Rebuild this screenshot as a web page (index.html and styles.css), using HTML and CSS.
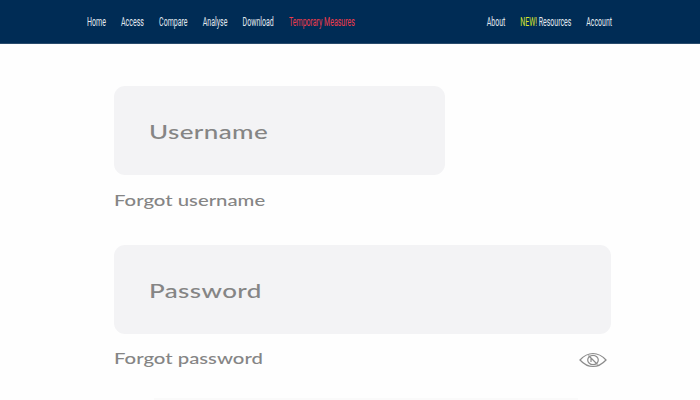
FILE: index.html
```html
<!DOCTYPE html>
<html lang="en">
<head>
<meta charset="utf-8">
<title>Sign in</title>
<link rel="stylesheet" href="styles.css">
</head>
<body>
<nav class="bar">
  <div class="links">
    <a>Home</a><a>Access</a><a>Compare</a><a>Analyse</a><a>Download</a><a class="alert">Temporary Measures</a>
  </div>
  <div class="links right">
    <a>About</a><a><span class="new">NEW!</span> Resources</a><a>Account</a>
  </div>
</nav>
<main class="form">
  <div class="field short"><span class="wide">Username</span></div>
  <div class="row"><a class="wide">Forgot username</a></div>
  <div class="field"><span class="wide">Password</span></div>
  <div class="row"><a class="wide">Forgot password</a>
    <svg class="eye" width="28" height="16" viewBox="0 0 28 16" fill="none" stroke="#8c8c8c" stroke-width="1.2">
      <path d="M1 8Q7 1.5 14 1.5Q21 1.5 27 8Q21 14.5 14 14.5Q7 14.5 1 8Z"/>
      <ellipse cx="14" cy="8" rx="5.3" ry="4.7"/>
      <path d="M9.5 3.5L18.5 12.5M12 10V6.5"/>
    </svg>
  </div>
  <div class="line"></div>
</main>
</body>
</html>
```
FILE: styles.css
```css
* { box-sizing: border-box; }
body { margin: 0; height: 400px; overflow: hidden; background: #fefefe; }
.bar {
  height: 44px;
  padding: 1px 88px 0 87px;
  display: flex;
  justify-content: space-between;
  align-items: center;
  background: #002c55;
  border-bottom: 1px solid #294b6c;
  font: 12px/14px Roboto, sans-serif;
  color: #e2e9ef;
}
.links {
  display: flex;
  gap: 26px;
  width: 260px;
  white-space: nowrap;
  transform: scaleX(.584);
  transform-origin: left;
}
.right { justify-content: flex-end; transform: scaleX(.578); transform-origin: right; }
.alert { color: #ee3b4b; }
.new { color: #d5e52b; }
.form {
  width: 497px;
  margin: 42px 0 0 114px;
  font-family: Lato, sans-serif;
  color: #858585;
}
.field {
  height: 89px;
  padding-left: 35px;
  display: flex;
  align-items: center;
  border-radius: 11px;
  background: #f3f3f5;
  font-size: 20px;
  font-weight: 500;
  letter-spacing: .3px;
}
.short { width: 331px; }
.wide { transform: scaleX(1.3); transform-origin: left; padding-top: 1px; }
.row {
  height: 69.5px;
  padding: 14.5px 4px 0 0;
  display: flex;
  align-items: flex-start;
  justify-content: space-between;
  font-size: 16px;
  font-weight: 500;
  line-height: 20px;
}
.row .wide { padding: 0; transform: scaleX(1.27); }
.eye { margin-top: 4px; }
.line { height: 2px; margin: -5px 33px 0 40px; background: #fafafa; }
```
